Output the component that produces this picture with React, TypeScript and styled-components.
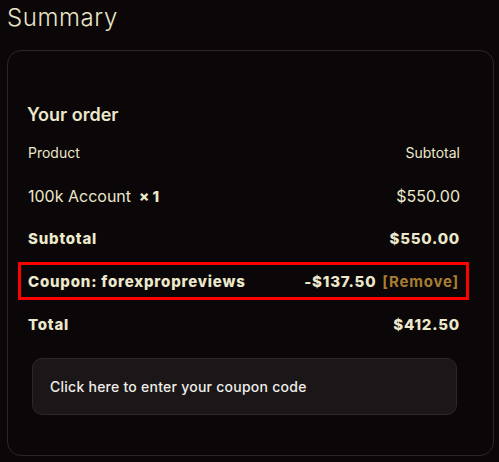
import styled, { createGlobalStyle } from 'styled-components';

const GlobalStyle = createGlobalStyle`
  html, body {
    margin: 0;
    padding: 0;
    background: #0b0607;
  }
  body {
    font-family: Inter, 'Open Sans', sans-serif;
    color: #ece8cc;
  }
`;

const Page = styled.div`
  width: 499px;
  height: 462px;
  padding: 0 5px 0 7px;
  box-sizing: border-box;
  overflow: hidden;
`;

const Title = styled.h2`
  margin: 0;
  height: 50px;
  padding-top: 3px;
  box-sizing: border-box;
  font-family: Inter, sans-serif;
  font-size: 24px;
  font-weight: 300;
  line-height: 30px;
  letter-spacing: 0.6px;
  color: #e9e5c6;
`;

const Card = styled.div`
  height: 406px;
  box-sizing: border-box;
  border: 1px solid #2b2627;
  border-radius: 14px;
  background: #0b0607;
  padding: 52px 24px 0 10px;
  display: flex;
  flex-direction: column;
`;

const Heading = styled.h3`
  margin: 0 0 0 9px;
  height: 28px;
  font-size: 18px;
  font-weight: 600;
  line-height: 24px;
  color: #ece8cc;
`;

const Rows = styled.div`
  display: flex;
  flex-direction: column;
`;

const Row = styled.div<{ $bold?: boolean; $size?: number; $marked?: boolean }>`
  height: ${(p) => (p.$marked ? 38 : 43)}px;
  margin: ${(p) => (p.$marked ? '2px 0 3px' : '0')};
  box-sizing: border-box;
  border: ${(p) => (p.$marked ? '3px solid #ff0000' : 'none')};
  padding: ${(p) => (p.$marked ? '0 7px 0 7px' : '0 9px 0 10px')};
  display: flex;
  align-items: center;
  justify-content: space-between;
  font-size: ${(p) => p.$size ?? 15}px;
  font-weight: ${(p) => (p.$bold ? 800 : 400)};
  letter-spacing: ${(p) => (p.$bold ? '0.8px' : '0')};
  color: #ece8cc;
`;

const Qty = styled.strong`
  margin-left: 8px;
  font-weight: 800;
  font-size: 15px;
`;

const RemoveLink = styled.a`
  margin-left: 6px;
  color: #a77d32;
  font-weight: 700;
  cursor: pointer;
`;

const CouponBox = styled.div`
  margin: 12px 12px 0 14px;
  height: 57px;
  box-sizing: border-box;
  border: 1px solid #2c2829;
  border-radius: 10px;
  background: #1b1718;
  padding: 0 17px;
  display: flex;
  align-items: center;
  font-size: 14px;
  font-weight: 500;
  letter-spacing: 0.25px;
  color: #efedea;
  cursor: pointer;
`;

export default function App() {
  return (
    <>
      <GlobalStyle />
      <Page>
        <Title>Summary</Title>
        <Card>
          <Heading>Your order</Heading>
          <Rows>
            <Row $size={14}>
              <span>Product</span>
              <span>Subtotal</span>
            </Row>
            <Row $size={16}>
              <span>
                100k Account<Qty>× 1</Qty>
              </span>
              <span>$550.00</span>
            </Row>
            <Row $bold>
              <span>Subtotal</span>
              <span>$550.00</span>
            </Row>
            <Row $bold $marked>
              <span>Coupon: forexpropreviews</span>
              <span>
                -$137.50<RemoveLink>[Remove]</RemoveLink>
              </span>
            </Row>
            <Row $bold>
              <span>Total</span>
              <span>$412.50</span>
            </Row>
          </Rows>
          <CouponBox>Click here to enter your coupon code</CouponBox>
        </Card>
      </Page>
    </>
  );
}
